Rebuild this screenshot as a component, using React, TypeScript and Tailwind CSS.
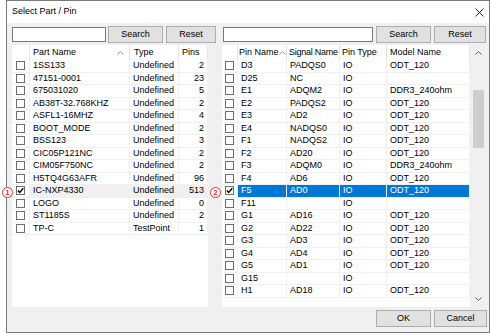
import React from "react";

type Part = { name: string; type: string; pins: number; checked?: boolean; dim?: boolean };
type Pin = { pin: string; signal: string; kind: string; model: string; checked?: boolean; selected?: boolean };

const parts: Part[] = [
  { name: "1SS133", type: "Undefined", pins: 2 },
  { name: "47151-0001", type: "Undefined", pins: 23 },
  { name: "675031020", type: "Undefined", pins: 5 },
  { name: "AB38T-32.768KHZ", type: "Undefined", pins: 2 },
  { name: "ASFL1-16MHZ", type: "Undefined", pins: 4 },
  { name: "BOOT_MODE", type: "Undefined", pins: 2 },
  { name: "BSS123", type: "Undefined", pins: 3 },
  { name: "CIC05P121NC", type: "Undefined", pins: 2 },
  { name: "CIM05F750NC", type: "Undefined", pins: 2 },
  { name: "H5TQ4G63AFR", type: "Undefined", pins: 96 },
  { name: "IC-NXP4330", type: "Undefined", pins: 513, checked: true, dim: true },
  { name: "LOGO", type: "Undefined", pins: 0 },
  { name: "ST1185S", type: "Undefined", pins: 2 },
  { name: "TP-C", type: "TestPoint", pins: 1 },
];

const pins: Pin[] = [
  { pin: "D3", signal: "PADQS0", kind: "IO", model: "ODT_120" },
  { pin: "D25", signal: "NC", kind: "IO", model: "" },
  { pin: "E1", signal: "ADQM2", kind: "IO", model: "DDR3_240ohm" },
  { pin: "E2", signal: "PADQS2", kind: "IO", model: "ODT_120" },
  { pin: "E3", signal: "AD2", kind: "IO", model: "ODT_120" },
  { pin: "E4", signal: "NADQS0", kind: "IO", model: "ODT_120" },
  { pin: "F1", signal: "NADQS2", kind: "IO", model: "ODT_120" },
  { pin: "F2", signal: "AD20", kind: "IO", model: "ODT_120" },
  { pin: "F3", signal: "ADQM0", kind: "IO", model: "DDR3_240ohm" },
  { pin: "F4", signal: "AD6", kind: "IO", model: "ODT_120" },
  { pin: "F5", signal: "AD0", kind: "IO", model: "ODT_120", checked: true, selected: true },
  { pin: "F11", signal: "", kind: "IO", model: "" },
  { pin: "G1", signal: "AD16", kind: "IO", model: "ODT_120" },
  { pin: "G2", signal: "AD22", kind: "IO", model: "ODT_120" },
  { pin: "G3", signal: "AD3", kind: "IO", model: "ODT_120" },
  { pin: "G4", signal: "AD4", kind: "IO", model: "ODT_120" },
  { pin: "G5", signal: "AD1", kind: "IO", model: "ODT_120" },
  { pin: "G15", signal: "", kind: "IO", model: "" },
  { pin: "H1", signal: "AD18", kind: "IO", model: "ODT_120" },
];

function Check({ checked }: { checked?: boolean }) {
  return (
    <span className="flex h-[9px] w-[9px] items-center justify-center border border-[#6d6d6d] bg-white">
      {checked && (
        <svg width="7" height="7" viewBox="0 0 7 7">
          <path d="M0.8 3.4 L2.7 5.4 L6.3 1.2" stroke="#000" strokeWidth="1.4" fill="none" />
        </svg>
      )}
    </span>
  );
}

function Btn({ label, className = "" }: { label: string; className?: string }) {
  return (
    <button className={`flex h-[17px] items-center justify-center border border-[#adadad] bg-[#e1e1e1] text-[9px] text-black ${className}`}>
      {label}
    </button>
  );
}

function SortArrow() {
  return (
    <svg width="7" height="4" viewBox="0 0 7 4" className="shrink-0">
      <path d="M0.5 3.5 L3.5 0.5 L6.5 3.5" stroke="#8a8a8a" strokeWidth="0.9" fill="none" />
    </svg>
  );
}

function Marker({ n }: { n: string }) {
  return (
    <span className="absolute flex h-[11px] w-[11px] items-center justify-center rounded-full border border-[#e2332b] bg-white text-[8px] font-bold leading-none text-[#e2332b]">
      {n}
    </span>
  );
}

const cell = "flex h-full items-center border-r border-[#f0f0f0] px-[3px] overflow-hidden whitespace-nowrap";
const head = "flex h-full items-center border-r border-[#e5e5e5] overflow-hidden whitespace-nowrap";

export default function App() {
  return (
    <div className="h-[333px] w-[491px] bg-white font-['Liberation_Sans',Arial,sans-serif] text-[9px] text-black">
      <div className="relative ml-[6px] flex h-[333px] w-[484px] flex-col border border-[#7a7a7a] bg-[#f0f0f0]">
        {/* title bar */}
        <div className="flex h-[22px] items-center justify-between bg-white pl-[5px] pr-[4px]">
          <span>Select Part / Pin</span>
          <svg width="9" height="9" viewBox="0 0 9 9" className="mr-[1px]">
            <path d="M0.5 0.5 L8.5 8.5 M8.5 0.5 L0.5 8.5" stroke="#111" strokeWidth="0.9" />
          </svg>
        </div>

        <div className="flex gap-[6px] pl-[5px] pt-[3px]">
          {/* left pane */}
          <div className="flex w-[204px] flex-col">
            <div className="flex h-[17px] items-center">
              <div className="h-[15px] w-[94px] border border-[#7a7a7a] bg-white" />
              <Btn label="Search" className="ml-[2px] w-[55px]" />
              <Btn label="Reset" className="ml-[3px] w-[50px]" />
            </div>
            <div className="mt-[2px] flex h-[262px] w-[196px] flex-col bg-white">
              <div className="flex h-[15px] shrink-0">
                <div className="h-full w-[18px] border-r border-[#e5e5e5]" />
                <div className={`${head} w-[100px] justify-between pl-[3px] pr-[5px]`}>
                  <span>Part Name</span>
                  <SortArrow />
                </div>
                <div className={`${head} w-[49px] pl-[4px]`}>Type</div>
                <div className={`${head} w-[29px] pl-[3px]`}>Pins</div>
              </div>
              {parts.map((p) => (
                <div key={p.name} className={`flex h-[12.5px] shrink-0 border-b border-[#f0f0f0] ${p.dim ? "bg-[#f0f0f0]" : ""}`}>
                  <div className={`${cell} w-[18px] justify-center bg-white px-0`}>
                    <Check checked={p.checked} />
                  </div>
                  <div className={`${cell} w-[100px]`}>{p.name}</div>
                  <div className={`${cell} w-[49px]`}>{p.type}</div>
                  <div className={`${cell} w-[29px] justify-end`}>{p.pins}</div>
                </div>
              ))}
            </div>
          </div>

          {/* right pane */}
          <div className="flex w-[264px] flex-col">
            <div className="flex h-[17px] items-center">
              <div className="ml-[1px] h-[15px] w-[150px] border border-[#7a7a7a] bg-white" />
              <Btn label="Search" className="ml-[3px] w-[55px]" />
              <Btn label="Reset" className="ml-[3px] w-[52px]" />
            </div>
            <div className="mt-[2px] flex h-[262px] w-[264px] bg-white">
              <div className="flex w-[248px] flex-col">
                <div className="flex h-[15px] shrink-0">
                  <div className="h-full w-[16px] border-r border-[#e5e5e5]" />
                  <div className={`${head} w-[49px] justify-between pl-[1px] pr-[2px]`}>
                    <span>Pin Name</span>
                    <SortArrow />
                  </div>
                  <div className={`${head} w-[53px] pl-[2px] tracking-[-0.25px]`}>Signal Name</div>
                  <div className={`${head} w-[47px] pl-[2px]`}>Pin Type</div>
                  <div className={`${head} w-[83px] pl-[3px]`}>Model Name</div>
                </div>
                {pins.map((p) => (
                  <div
                    key={p.pin}
                    className={`flex h-[12.5px] shrink-0 border-b border-[#f0f0f0] ${p.selected ? "bg-[#0078d7] text-white" : ""}`}
                  >
                    <div className={`${cell} w-[16px] justify-center bg-white px-0`}>
                      <Check checked={p.checked} />
                    </div>
                    <div className={`${cell} w-[49px] px-[1px]`}>{p.pin}</div>
                    <div className={`${cell} w-[53px] px-[2px]`}>{p.signal}</div>
                    <div className={`${cell} w-[47px] px-[2px]`}>{p.kind}</div>
                    <div className={`${cell} w-[83px] px-[1px]`}>{p.model}</div>
                  </div>
                ))}
              </div>
              {/* scrollbar */}
              <div className="flex w-[16px] flex-col items-center bg-[#f0f0f0]">
                <div className="flex h-[16px] w-full items-center justify-center">
                  <svg width="7" height="4" viewBox="0 0 7 4">
                    <path d="M0.5 3.5 L3.5 0.5 L6.5 3.5" stroke="#606060" strokeWidth="1" fill="none" />
                  </svg>
                </div>
                <div className="mt-[29px] h-[58px] w-[11px] bg-[#cdcdcd]" />
                <div className="flex-1" />
                <div className="flex h-[16px] w-full items-center justify-center">
                  <svg width="7" height="4" viewBox="0 0 7 4">
                    <path d="M0.5 0.5 L3.5 3.5 L6.5 0.5" stroke="#606060" strokeWidth="1" fill="none" />
                  </svg>
                </div>
              </div>
            </div>
          </div>
        </div>

        <div className="mt-[3px] flex justify-end gap-[3px] pr-[2px]">
          <Btn label="OK" className="w-[55px] border-[#0078d7]" />
          <Btn label="Cancel" className="w-[53px]" />
        </div>

        {/* annotations */}
        <div className="absolute left-[-5px] top-[186px]">
          <Marker n="1" />
        </div>
        <div className="absolute left-[203px] top-[186px]">
          <Marker n="2" />
        </div>
      </div>
    </div>
  );
}
